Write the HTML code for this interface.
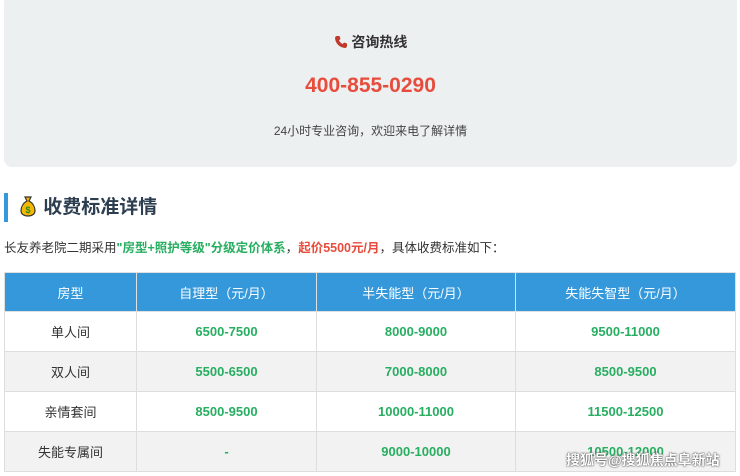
<!DOCTYPE html>
<html><head><meta charset="utf-8"><style>
*{margin:0;padding:0;box-sizing:border-box}
body{width:740px;height:476px;overflow:hidden;background:#fff;font-family:"Liberation Sans","Noto Sans CJK SC",sans-serif;color:#333;position:relative}
.box{position:absolute;left:4px;top:-6px;width:733px;height:173px;background:#ecf0f1;border-radius:8px;text-align:center}
.t1{position:absolute;top:38px;width:100%;font-size:14px;font-weight:bold;color:#333}
.t2{position:absolute;top:80px;width:100%;font-size:21px;font-weight:bold;color:#e74c3c}
.t3{position:absolute;top:128px;width:100%;font-size:12px;color:#444}
.h{position:absolute;left:4px;top:193px;height:29px;border-left:4px solid #3498db;padding-left:10px;font-size:19px;font-weight:bold;color:#2c3e50;line-height:29px}
.p{position:absolute;left:4px;top:237px;font-size:12.5px;color:#333}
.g{color:#27ae60;font-weight:bold}.r{color:#e74c3c;font-weight:bold}
table{position:absolute;left:4px;top:272px;width:732px;border-collapse:collapse;font-size:13px}
td,th{border:1px solid #ddd;text-align:center;height:40px}
th{background:#3498db;color:#fff;font-weight:normal;height:39px;border-color:#e0e0e0}
td{color:#27ae60;font-weight:bold}
td:first-child{color:#333;font-weight:normal}
tr.a td{background:#f2f2f2}
.wm{position:absolute;left:566px;top:450px;font-size:14px;color:#fff;text-shadow:0 0 2px #555,0 0 1px #333;font-weight:bold}
</style></head><body>
<div class="box">
<div class="t1"><svg width="14" height="14" viewBox="0 0 14 14" style="vertical-align:-2px"><path d="M3 1l2.5 0 1 3-1.5 1.2c.8 1.8 2 3 3.8 3.8L10 7.5l3 1V11c0 1-1 2-2 2C5.5 12.5 1.5 8.5 1 3c0-1 1-2 2-2z" fill="#c0392b"/></svg> 咨询热线</div>
<div class="t2">400-855-0290</div>
<div class="t3">24小时专业咨询，欢迎来电了解详情</div>
</div>
<div class="h"><svg width="20" height="22" viewBox="0 0 20 22" style="vertical-align:-4px"><path d="M7 2h6l-2 4c4 2 6 6 6 10 0 3-3 5-7 5s-7-2-7-5c0-4 2-8 6-10z" fill="#f5b800" stroke="#333" stroke-width="1.2"/><text x="10" y="18" font-size="9" text-anchor="middle" fill="#2a8a2a" font-family="Liberation Sans">$</text></svg> 收费标准详情</div>
<div class="p">长友养老院二期采用<span class="g">"房型+照护等级"分级定价体系</span>，<span class="r">起价5500元/月</span>，具体收费标准如下：</div>
<table>
<tr><th style="width:132px">房型</th><th style="width:180px">自理型（元/月）</th><th style="width:199px">半失能型（元/月）</th><th>失能失智型（元/月）</th></tr>
<tr><td>单人间</td><td>6500-7500</td><td>8000-9000</td><td>9500-11000</td></tr>
<tr class="a"><td>双人间</td><td>5500-6500</td><td>7000-8000</td><td>8500-9500</td></tr>
<tr><td>亲情套间</td><td>8500-9500</td><td>10000-11000</td><td>11500-12500</td></tr>
<tr class="a"><td>失能专属间</td><td>-</td><td>9000-10000</td><td>10500-12000</td></tr>
</table>
<div class="wm">搜狐号@搜狐焦点阜新站</div>
</body></html>
